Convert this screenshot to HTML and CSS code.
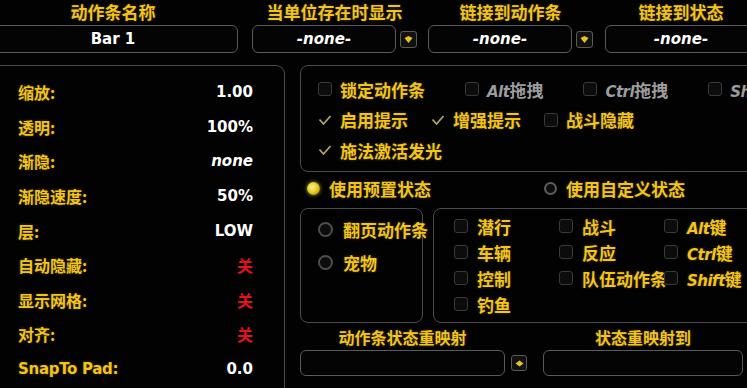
FILE: index.html
```html
<!DOCTYPE html>
<html lang="zh">
<head>
<meta charset="utf-8">
<title>动作条设置</title>
<link rel="stylesheet" href="styles.css">
</head>
<body>
<div class="page">
  <div class="top">
    <div class="grp g1">
      <div class="glabel y">动作条名称</div>
      <div class="field"><div class="input">Bar 1</div></div>
    </div>
    <div class="grp g2">
      <div class="glabel y">当单位存在时显示</div>
      <div class="field"><div class="input it">-none-</div><div class="ddbtn"><svg width="9" height="9" viewBox="0 0 9 9"><polygon points="0.5,3 4.5,1 8.5,3 4.5,8" fill="#e8c21e"/></svg></div></div>
    </div>
    <div class="grp g3">
      <div class="glabel y">链接到动作条</div>
      <div class="field"><div class="input it">-none-</div><div class="ddbtn"><svg width="9" height="9" viewBox="0 0 9 9"><polygon points="0.5,3 4.5,1 8.5,3 4.5,8" fill="#e8c21e"/></svg></div></div>
    </div>
    <div class="grp g4">
      <div class="glabel y">链接到状态</div>
      <div class="field"><div class="input it">-none-</div></div>
    </div>
  </div>

  <div class="main">
    <div class="left">
      <div class="row"><span class="lbl y">缩放:</span><span class="val">1.00</span></div>
      <div class="row"><span class="lbl y">透明:</span><span class="val">100%</span></div>
      <div class="row"><span class="lbl y">渐隐:</span><span class="val it">none</span></div>
      <div class="row"><span class="lbl y">渐隐速度:</span><span class="val">50%</span></div>
      <div class="row"><span class="lbl y">层:</span><span class="val">LOW</span></div>
      <div class="row"><span class="lbl y">自动隐藏:</span><span class="val off">关</span></div>
      <div class="row"><span class="lbl y">显示网格:</span><span class="val off">关</span></div>
      <div class="row"><span class="lbl y">对齐:</span><span class="val off">关</span></div>
      <div class="row"><span class="lbl y latin-lbl">SnapTo Pad:</span><span class="val">0.0</span></div>
    </div>

    <div class="right">
      <div class="box opts">
        <div class="crow r1">
          <div class="item"><span class="cb"></span><span class="y">锁定动作条</span></div>
          <div class="item"><span class="cb"></span><span class="gray"><span class="lat">Alt</span>拖拽</span></div>
          <div class="item"><span class="cb"></span><span class="gray"><span class="lat">Ctrl</span>拖拽</span></div>
          <div class="item"><span class="cb"></span><span class="gray"><span class="lat">Shift</span>拖拽</span></div>
        </div>
        <div class="crow r2">
          <div class="item"><svg class="ck" width="14" height="14" viewBox="0 0 14 14"><path d="M1.5 6.5 L5.5 11 L12.5 3" fill="none" stroke="#b9a764" stroke-width="1.7"/></svg><span class="y">启用提示</span></div>
          <div class="item"><svg class="ck" width="14" height="14" viewBox="0 0 14 14"><path d="M1.5 6.5 L5.5 11 L12.5 3" fill="none" stroke="#b9a764" stroke-width="1.7"/></svg><span class="y">增强提示</span></div>
          <div class="item"><span class="cb"></span><span class="y">战斗隐藏</span></div>
        </div>
        <div class="crow">
          <div class="item"><svg class="ck" width="14" height="14" viewBox="0 0 14 14"><path d="M1.5 6.5 L5.5 11 L12.5 3" fill="none" stroke="#b9a764" stroke-width="1.7"/></svg><span class="y">施法激活发光</span></div>
        </div>
      </div>

      <div class="radios">
        <div class="item"><span class="rd on"></span><span class="y">使用预置状态</span></div>
        <div class="item second"><span class="rd"></span><span class="y">使用自定义状态</span></div>
      </div>

      <div class="subs">
        <div class="box subl">
          <div class="ritem"><span class="rd ring"></span><span class="y">翻页动作条</span></div>
          <div class="ritem"><span class="rd ring"></span><span class="y">宠物</span></div>
        </div>
        <div class="box subr">
          <div class="item"><span class="cb"></span><span class="y">潜行</span></div>
          <div class="item"><span class="cb"></span><span class="y">车辆</span></div>
          <div class="item"><span class="cb"></span><span class="y">控制</span></div>
          <div class="item"><span class="cb"></span><span class="y">钓鱼</span></div>
          <div class="item"><span class="cb"></span><span class="y">战斗</span></div>
          <div class="item"><span class="cb"></span><span class="y">反应</span></div>
          <div class="item"><span class="cb"></span><span class="y">队伍动作条</span></div>
          <div class="item"></div>
          <div class="item"><span class="cb"></span><span class="y"><span class="lat">Alt</span>键</span></div>
          <div class="item"><span class="cb"></span><span class="y"><span class="lat">Ctrl</span>键</span></div>
          <div class="item"><span class="cb"></span><span class="y"><span class="lat">Shift</span>键</span></div>
        </div>
      </div>

      <div class="remap-labels">
        <div class="rl1 y">动作条状态重映射</div>
        <div class="rl2 y">状态重映射到</div>
      </div>
      <div class="remap-fields">
        <div class="rinput w1"></div>
        <div class="ddbtn small"><svg width="9" height="9" viewBox="0 0 9 9"><polygon points="0.5,4.5 4.5,1.5 8.5,4.5 4.5,7.5" fill="#e8c21e"/></svg></div>
        <div class="rinput w2"></div>
      </div>
    </div>
  </div>
</div>
</body>
</html>
```

FILE: styles.css
```css
* { box-sizing: border-box; }

body {
  margin: 0;
  background: #000;
  font-family: "Noto Sans CJK SC", "DejaVu Sans", sans-serif;
}

.page {
  width: 747px;
  height: 388px;
  overflow: hidden;
  background: #020202;
}

.y {
  color: #f3c51c;
  font-weight: 700;
  text-shadow: 0 0 1px #000, 0 0 3px rgba(243, 197, 28, 0.35);
}

.gray {
  color: #9c9c9c;
  font-weight: 700;
}

.lat {
  font-family: "DejaVu Sans", sans-serif;
  font-weight: 700;
  font-style: italic;
  font-size: 15px;
  letter-spacing: -0.5px;
}

.it { font-style: italic; }

/* top row */
.top {
  display: flex;
  align-items: flex-start;
}

.grp {
  display: flex;
  flex-direction: column;
  flex: none;
}

.glabel {
  height: 25px;
  line-height: 24px;
  text-align: center;
  font-size: 17px;
  white-space: nowrap;
}

.g1 { width: 250px; margin-left: -12px; }
.g2 { width: 165px; margin-left: 14px; }
.g3 { width: 165px; margin-left: 11px; }
.g4 { width: 152px; margin-left: 12px; }

.field {
  display: flex;
  align-items: center;
  gap: 4px;
  height: 28px;
}

.input {
  flex: 1;
  height: 28px;
  border: 1.5px solid #5a5a5a;
  border-radius: 6px;
  background: #040404;
  display: flex;
  align-items: center;
  justify-content: center;
  color: #fff;
  font-family: "DejaVu Sans", sans-serif;
  font-weight: 700;
  font-size: 15px;
}

.ddbtn {
  flex: none;
  width: 17px;
  height: 17px;
  border: 1px solid #5a5a5a;
  border-radius: 3px;
  background: #111;
  display: flex;
  align-items: center;
  justify-content: center;
}

/* main */
.main {
  display: flex;
  margin-top: 12px;
}

.left {
  flex: none;
  width: 295px;
  height: 340px;
  margin-left: -10px;
  border: 1.5px solid #4b4b4b;
  border-bottom: none;
  border-radius: 9px 9px 0 0;
  padding: 9px 31px 0 27px;
}

.row {
  height: 34.6px;
  display: flex;
  justify-content: space-between;
  align-items: center;
}

.lbl {
  font-size: 16px;
  white-space: nowrap;
}

.latin-lbl {
  font-family: "DejaVu Sans", sans-serif;
  font-size: 15px;
  letter-spacing: -0.3px;
}

.val {
  color: #fff;
  font-family: "DejaVu Sans", sans-serif;
  font-weight: 700;
  font-size: 15px;
}

.val.off {
  color: #e3121b;
  font-family: "Noto Sans CJK SC", sans-serif;
  font-size: 16px;
}

.right {
  flex: none;
  width: 470px;
  margin-left: 15px;
  display: flex;
  flex-direction: column;
}

.box {
  border: 1.5px solid #4b4b4b;
  border-radius: 8px;
}

.opts {
  height: 107px;
  padding: 8px 0 0 17px;
}

.crow {
  display: flex;
  align-items: center;
  height: 30.5px;
  white-space: nowrap;
  font-size: 17px;
}

.r1 { gap: 40px; }
.r2 { gap: 23px; }

.item {
  display: flex;
  align-items: center;
  gap: 8px;
  white-space: nowrap;
  font-size: 17px;
}

.cb {
  flex: none;
  width: 14px;
  height: 14px;
  border: 1px solid #3a3a3a;
  border-radius: 3px;
  background: #0c0c0c;
}

.ck { flex: none; }

.radios {
  height: 36px;
  display: flex;
  align-items: center;
  padding: 0 0 3px 7px;
}

.radios .item { gap: 9px; }
.radios .second { margin-left: 113px; }

.rd {
  flex: none;
  width: 13px;
  height: 13px;
  border-radius: 50%;
  border: 2px solid #5d5d5d;
  background: #0d0d0d;
}

.rd.on {
  border: none;
  background: radial-gradient(circle at 40% 40%, #fff39a 0%, #e8d020 45%, #8c7a08 100%);
  box-shadow: 0 0 4px rgba(240, 220, 40, 0.7);
}

.rd.ring {
  width: 15px;
  height: 15px;
  border-color: #4e4e4e;
}

.subs {
  display: flex;
  gap: 10px;
  height: 115px;
}

.subl {
  flex: none;
  width: 123px;
  padding: 4px 0 0 17px;
}

.ritem {
  display: flex;
  align-items: center;
  gap: 10px;
  height: 33px;
  white-space: nowrap;
  font-size: 17px;
}

.subr {
  flex: none;
  width: 330px;
  padding: 4px 0 0 20px;
  display: grid;
  grid-auto-flow: column;
  grid-template-rows: repeat(4, 26px);
  grid-template-columns: repeat(3, 105px);
}

.subr .item { gap: 9px; }

.remap-labels {
  height: 27px;
  display: flex;
  align-items: center;
  font-size: 16px;
}

.rl1 { width: 205px; text-align: center; white-space: nowrap; }
.rl2 { width: 200px; margin-left: 38px; text-align: center; white-space: nowrap; }

.remap-fields {
  display: flex;
  align-items: center;
  height: 26px;
}

.rinput {
  flex: none;
  height: 26px;
  border: 1.5px solid #5a5a5a;
  border-radius: 6px;
  background: #040404;
}

.w1 { width: 205px; }
.w2 { width: 200px; margin-left: 16px; }

.ddbtn.small {
  width: 16px;
  height: 16px;
  margin-left: 6px;
}
```
